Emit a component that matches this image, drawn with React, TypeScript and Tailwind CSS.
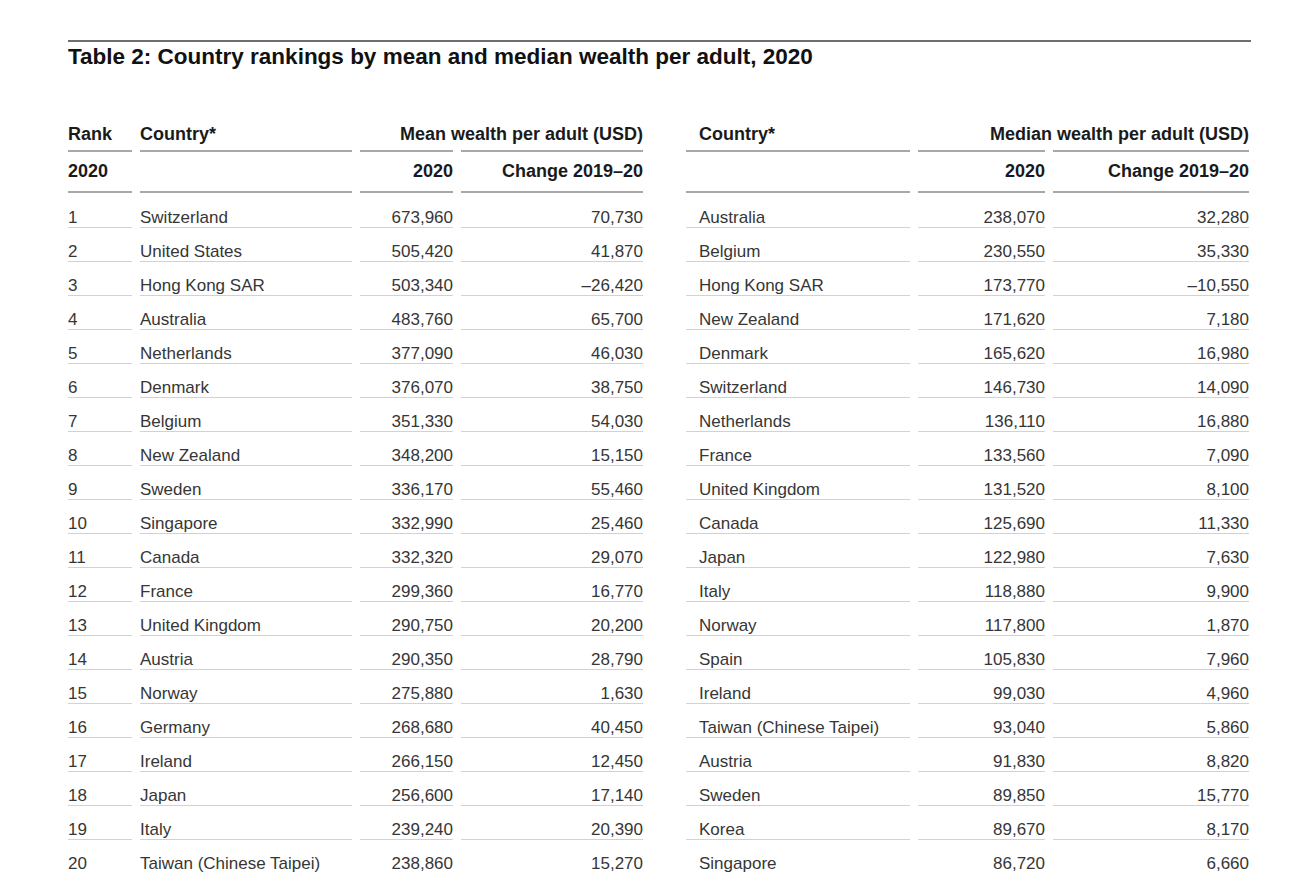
const font = { fontFamily: '"Liberation Sans", Arial, Helvetica, sans-serif' };

type LeftRow = [number, string, string, string];
type RightRow = [string, string, string];

const meanRows: LeftRow[] = [
  [1, 'Switzerland', '673,960', '70,730'],
  [2, 'United States', '505,420', '41,870'],
  [3, 'Hong Kong SAR', '503,340', '–26,420'],
  [4, 'Australia', '483,760', '65,700'],
  [5, 'Netherlands', '377,090', '46,030'],
  [6, 'Denmark', '376,070', '38,750'],
  [7, 'Belgium', '351,330', '54,030'],
  [8, 'New Zealand', '348,200', '15,150'],
  [9, 'Sweden', '336,170', '55,460'],
  [10, 'Singapore', '332,990', '25,460'],
  [11, 'Canada', '332,320', '29,070'],
  [12, 'France', '299,360', '16,770'],
  [13, 'United Kingdom', '290,750', '20,200'],
  [14, 'Austria', '290,350', '28,790'],
  [15, 'Norway', '275,880', '1,630'],
  [16, 'Germany', '268,680', '40,450'],
  [17, 'Ireland', '266,150', '12,450'],
  [18, 'Japan', '256,600', '17,140'],
  [19, 'Italy', '239,240', '20,390'],
  [20, 'Taiwan (Chinese Taipei)', '238,860', '15,270'],
];

const medianRows: RightRow[] = [
  ['Australia', '238,070', '32,280'],
  ['Belgium', '230,550', '35,330'],
  ['Hong Kong SAR', '173,770', '–10,550'],
  ['New Zealand', '171,620', '7,180'],
  ['Denmark', '165,620', '16,980'],
  ['Switzerland', '146,730', '14,090'],
  ['Netherlands', '136,110', '16,880'],
  ['France', '133,560', '7,090'],
  ['United Kingdom', '131,520', '8,100'],
  ['Canada', '125,690', '11,330'],
  ['Japan', '122,980', '7,630'],
  ['Italy', '118,880', '9,900'],
  ['Norway', '117,800', '1,870'],
  ['Spain', '105,830', '7,960'],
  ['Ireland', '99,030', '4,960'],
  ['Taiwan (Chinese Taipei)', '93,040', '5,860'],
  ['Austria', '91,830', '8,820'],
  ['Sweden', '89,850', '15,770'],
  ['Korea', '89,670', '8,170'],
  ['Singapore', '86,720', '6,660'],
];

// header cells: row 1 has underline under each column, title text may span two
function Head1({ children, right, indent }: { children?: React.ReactNode; right?: boolean; indent?: boolean }) {
  return (
    <div className={`pb-[5px] border-b-2 border-[#a8a8a8] text-[18px] leading-[22px] font-bold text-[#1a1a1a] whitespace-nowrap ${right ? 'text-right' : ''} ${indent ? 'pl-[13px]' : ''}`}>
      {children}
    </div>
  );
}

function Head2({ children, right }: { children?: React.ReactNode; right?: boolean }) {
  return (
    <div className={`pt-2 pb-[9px] border-b-2 border-[#a8a8a8] text-[18px] leading-[22px] font-bold text-[#1a1a1a] whitespace-nowrap ${right ? 'text-right' : ''}`}>
      {children || '\u00a0'}
    </div>
  );
}

// spanning header: text right aligned over two columns, separate underlines
function SpanHead({ label, cols }: { label: string; cols: string }) {
  return (
    <div className={`col-span-2 grid ${cols} gap-x-2`}>
      <div className="col-span-2 pb-[5px] text-right text-[18px] leading-[22px] font-bold text-[#1a1a1a] whitespace-nowrap">
        {label}
      </div>
      <div className="border-b-2 border-[#a8a8a8]" />
      <div className="border-b-2 border-[#a8a8a8]" />
    </div>
  );
}

function Cell({ children, right, first, last, indent }: { children: React.ReactNode; right?: boolean; first?: boolean; last?: boolean; indent?: boolean }) {
  return (
    <div
      className={`${first ? 'pt-4' : 'pt-[15px]'} ${last ? '' : 'border-b border-[#d2d2d2]'} ${indent ? 'pl-[13px]' : ''} text-[17px] leading-[18px] text-[#363636] whitespace-nowrap ${right ? 'text-right' : ''}`}
    >
      {children}
    </div>
  );
}

export default function App() {
  return (
    <div className="w-[1305px] h-[885px] overflow-hidden bg-white pl-[68px] pt-10" style={font}>
      <div className="w-[1183px] h-[2px] bg-[#6e6e6e]" />
      <h1 className="mt-px text-[22.5px] leading-[28px] font-bold text-[#111]">
        Table 2: Country rankings by mean and median wealth per adult, 2020
      </h1>

      <div className="mt-[52px] flex gap-[43px]">
        {/* mean wealth */}
        <div className="grid grid-cols-[64px_212px_93px_182px] gap-x-2">
          <Head1>Rank</Head1>
          <Head1>Country*</Head1>
          <SpanHead label="Mean wealth per adult (USD)" cols="grid-cols-[93px_182px]" />

          <Head2>2020</Head2>
          <Head2 />
          <Head2 right>2020</Head2>
          <Head2 right>Change 2019–20</Head2>

          {meanRows.map((r, i) => {
            const first = i === 0;
            const last = i === meanRows.length - 1;
            return [
              <Cell key={`r${i}`} first={first} last={last}>{r[0]}</Cell>,
              <Cell key={`c${i}`} first={first} last={last}>{r[1]}</Cell>,
              <Cell key={`m${i}`} first={first} last={last} right>{r[2]}</Cell>,
              <Cell key={`d${i}`} first={first} last={last} right>{r[3]}</Cell>,
            ];
          })}
        </div>

        {/* median wealth */}
        <div className="grid grid-cols-[224px_127px_196px] gap-x-2">
          <Head1 indent>Country*</Head1>
          <SpanHead label="Median wealth per adult (USD)" cols="grid-cols-[127px_196px]" />

          <Head2 />
          <Head2 right>2020</Head2>
          <Head2 right>Change 2019–20</Head2>

          {medianRows.map((r, i) => {
            const first = i === 0;
            const last = i === medianRows.length - 1;
            return [
              <Cell key={`c${i}`} first={first} last={last} indent>{r[0]}</Cell>,
              <Cell key={`m${i}`} first={first} last={last} right>{r[1]}</Cell>,
              <Cell key={`d${i}`} first={first} last={last} right>{r[2]}</Cell>,
            ];
          })}
        </div>
      </div>
    </div>
  );
}
